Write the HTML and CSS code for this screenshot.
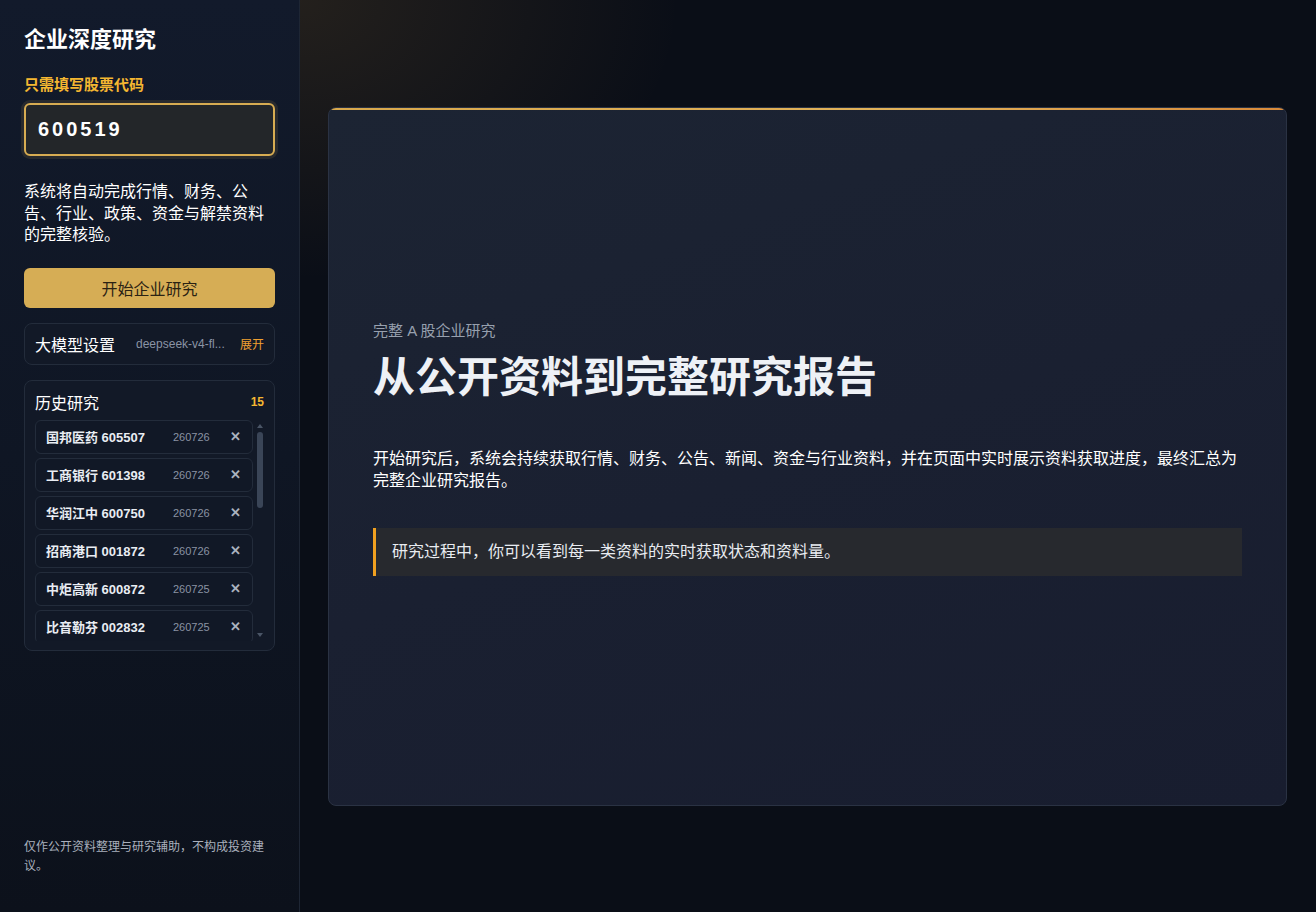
FILE: index.html
```html
<!DOCTYPE html>
<html lang="zh-CN">
<head>
<meta charset="utf-8">
<title>企业深度研究</title>
<link rel="stylesheet" href="styles.css">
</head>
<body>
<div class="app">
  <aside class="sidebar">
    <h1 class="brand">企业深度研究</h1>
    <label class="field-label" for="code">只需填写股票代码</label>
    <input id="code" class="code-input" type="text" value="600519">
    <p class="desc">系统将自动完成行情、财务、公告、行业、政策、资金与解禁资料的完整核验。</p>
    <button class="start-btn">开始企业研究</button>
    <div class="panel model">
      <span class="model-title">大模型设置</span>
      <span class="model-name">deepseek-v4-fl...</span>
      <span class="model-toggle">展开</span>
    </div>
    <div class="panel history">
      <div class="history-head">
        <span class="history-title">历史研究</span>
        <span class="history-count">15</span>
      </div>
      <div class="history-body">
        <ul class="history-list">
          <li class="item"><span class="item-name">国邦医药 605507</span><span class="item-date">260726</span><span class="item-del">✕</span></li>
          <li class="item"><span class="item-name">工商银行 601398</span><span class="item-date">260726</span><span class="item-del">✕</span></li>
          <li class="item"><span class="item-name">华润江中 600750</span><span class="item-date">260726</span><span class="item-del">✕</span></li>
          <li class="item"><span class="item-name">招商港口 001872</span><span class="item-date">260726</span><span class="item-del">✕</span></li>
          <li class="item"><span class="item-name">中炬高新 600872</span><span class="item-date">260725</span><span class="item-del">✕</span></li>
          <li class="item"><span class="item-name">比音勒芬 002832</span><span class="item-date">260725</span><span class="item-del">✕</span></li>
        </ul>
        <div class="scrollbar">
          <span class="sb-arrow sb-up"></span>
          <span class="sb-track"><span class="sb-thumb"></span></span>
          <span class="sb-arrow sb-down"></span>
        </div>
      </div>
    </div>
    <p class="footnote">仅作公开资料整理与研究辅助，不构成投资建议。</p>
  </aside>
  <main class="main">
    <section class="card">
      <div class="card-inner">
        <p class="eyebrow">完整 A 股企业研究</p>
        <h2 class="headline">从公开资料到完整研究报告</h2>
        <p class="lead">开始研究后，系统会持续获取行情、财务、公告、新闻、资金与行业资料，并在页面中实时展示资料获取进度，最终汇总为完整企业研究报告。</p>
        <div class="callout">研究过程中，你可以看到每一类资料的实时获取状态和资料量。</div>
      </div>
    </section>
  </main>
</div>
</body>
</html>
```

FILE: styles.css
```css
* { box-sizing: border-box; }
html, body { margin: 0; padding: 0; height: 100%; }
body {
  font-family: "Liberation Sans", "Noto Sans CJK SC", sans-serif;
  background: #0a0e17;
  color: #eef1f6;
  overflow: hidden;
}
.app {
  display: flex;
  width: 1316px;
  height: 912px;
}
.sidebar {
  width: 300px;
  flex: none;
  display: flex;
  flex-direction: column;
  padding: 25px 24px 36px 24px;
  background: linear-gradient(180deg, #121a2b 0%, #0f1624 50%, #0c111b 100%);
  border-right: 1px solid #1e2634;
}
.brand {
  margin: 0;
  font-size: 22px;
  line-height: 30px;
  font-weight: 700;
  color: #ffffff;
}
.field-label {
  margin-top: 20px;
  font-size: 15px;
  line-height: 20px;
  font-weight: 700;
  color: #f5b731;
}
.code-input {
  margin-top: 8px;
  width: 251px;
  height: 53px;
  padding: 0 12px;
  border: 2px solid #d7ac52;
  border-radius: 6px;
  background: #232629;
  color: #ffffff;
  font-family: "Liberation Sans", sans-serif;
  font-size: 20px;
  font-weight: 700;
  letter-spacing: 3px;
  outline: none;
  box-shadow: 0 0 0 3px rgba(215, 172, 82, 0.12);
}
.desc {
  margin: 25px 0 0 0;
  font-size: 16px;
  line-height: 21.5px;
  color: #ffffff;
}
.start-btn {
  margin-top: 22px;
  height: 40px;
  width: 251px;
  border: none;
  border-radius: 6px;
  background: #d6ad55;
  color: #2b2213;
  font-family: "Liberation Sans", "Noto Sans CJK SC", sans-serif;
  font-size: 16px;
}
.panel {
  border: 1px solid #232c3b;
  border-radius: 8px;
  background: #121927;
}
.model {
  margin-top: 15px;
  height: 42px;
  display: flex;
  align-items: center;
  padding: 0 10px;
}
.model-title {
  font-size: 16px;
  color: #ffffff;
}
.model-name {
  margin-left: 21px;
  font-size: 12px;
  color: #8a94a5;
}
.model-toggle {
  margin-left: auto;
  font-size: 12px;
  color: #f0a030;
}
.history {
  margin-top: 15px;
  padding: 10px 10px 9px 10px;
}
.history-head {
  display: flex;
  align-items: center;
  justify-content: space-between;
  height: 22px;
}
.history-title {
  font-size: 16px;
  color: #ffffff;
}
.history-count {
  font-size: 12px;
  font-weight: 700;
  color: #f5b731;
}
.history-body {
  margin-top: 7px;
  height: 221px;
  display: flex;
  gap: 3px;
}
.history-list {
  list-style: none;
  margin: 0;
  padding: 0;
  flex: 1;
  overflow: hidden;
  display: flex;
  flex-direction: column;
  gap: 4px;
}
.item {
  flex: none;
  height: 34px;
  display: flex;
  align-items: center;
  padding: 0 11px 0 10px;
  border: 1px solid #232c3b;
  border-radius: 6px;
  background: #111826;
}
.item-name {
  font-size: 13px;
  font-weight: 700;
  color: #e9edf3;
  width: 127px;
  white-space: nowrap;
}
.item-date {
  font-size: 11px;
  color: #8a93a3;
}
.item-del {
  margin-left: auto;
  font-size: 13px;
  font-weight: 700;
  color: #aab2bf;
}
.scrollbar {
  width: 8px;
  flex: none;
  display: flex;
  flex-direction: column;
  align-items: center;
}
.sb-arrow {
  width: 0;
  height: 0;
  border-left: 3px solid transparent;
  border-right: 3px solid transparent;
  margin: 4px 0;
}
.sb-up { border-bottom: 4px solid #4a5566; }
.sb-down { border-top: 4px solid #4a5566; }
.sb-track {
  flex: 1;
  width: 6px;
  display: flex;
  flex-direction: column;
}
.sb-thumb {
  margin-top: 0;
  height: 76px;
  width: 6px;
  border-radius: 3px;
  background: #3a4557;
}
.footnote {
  margin: auto 0 0 0;
  font-size: 12px;
  line-height: 19px;
  color: #a9b0bc;
}
.main {
  flex: 1;
  display: flex;
  align-items: center;
  padding: 0 29px 0 28px;
  background:
    radial-gradient(ellipse 380px 280px at 0 0, rgba(190, 140, 60, 0.14), transparent 100%),
    #0a0e17;
}
.card {
  position: relative;
  width: 959px;
  height: 699px;
  border: 1px solid #2a3243;
  border-radius: 8px;
  background: linear-gradient(160deg, #1c2433 0%, #1a2031 50%, #181d2f 100%);
  display: flex;
  align-items: center;
  overflow: hidden;
}
.card::before {
  content: "";
  position: absolute;
  left: 0;
  right: 0;
  top: 0;
  height: 2px;
  background: linear-gradient(90deg, #d8a84c 0%, #e2b25a 60%, #d98a3a 100%);
}
.card-inner {
  width: 100%;
  padding: 0 44px 16px 44px;
}
.eyebrow {
  margin: 0;
  font-size: 15px;
  line-height: 22px;
  color: #97a0ae;
}
.headline {
  margin: 11px 0 0 0;
  font-size: 42px;
  line-height: 50px;
  font-weight: 700;
  color: #eef1f6;
}
.lead {
  margin: 45px 0 0 0;
  font-size: 16px;
  line-height: 22px;
  color: #ffffff;
}
.callout {
  margin-top: 36px;
  padding: 13px 16px;
  border-left: 3px solid #f0a020;
  background: #27292e;
  font-size: 16px;
  line-height: 22px;
  color: #e9ecf1;
}
```
